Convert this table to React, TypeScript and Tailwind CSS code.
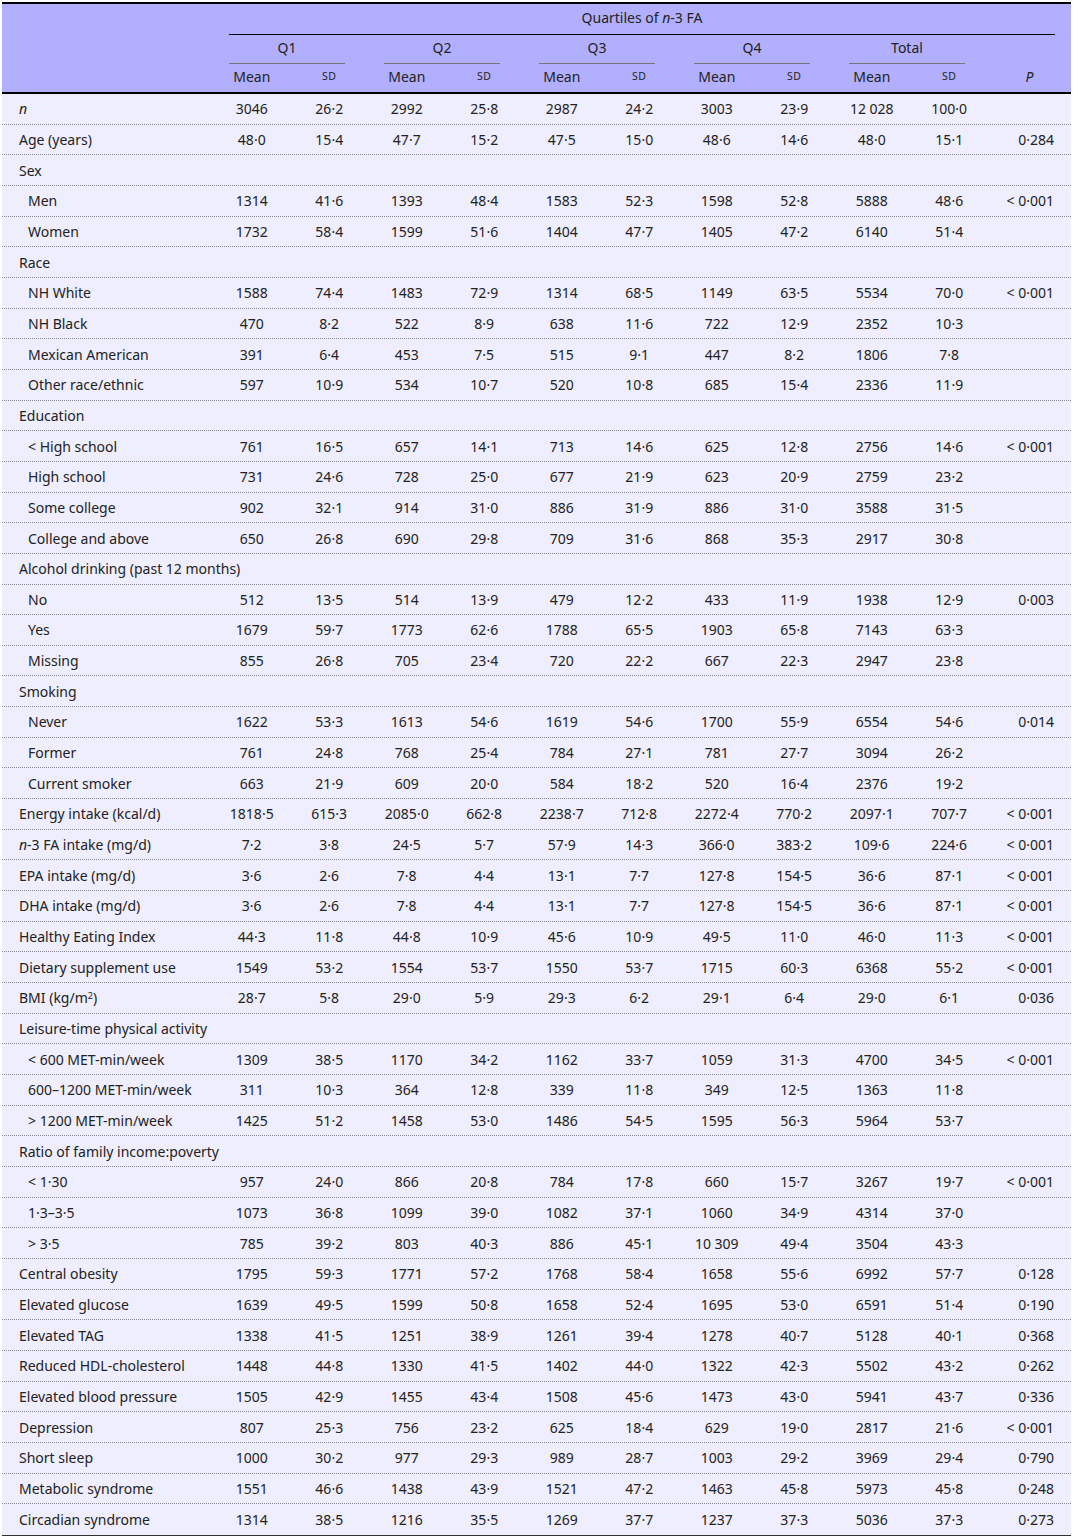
import React from 'react';

type Row = {
  label: React.ReactNode;
  indent?: boolean;
  values?: string[];
  p?: string;
};

const rows: Row[] = [
  { label: <i>n</i>, values: ['3046', '26·2', '2992', '25·8', '2987', '24·2', '3003', '23·9', '12 028', '100·0'] },
  { label: 'Age (years)', values: ['48·0', '15·4', '47·7', '15·2', '47·5', '15·0', '48·6', '14·6', '48·0', '15·1'], p: '0·284' },
  { label: 'Sex' },
  { label: 'Men', indent: true, values: ['1314', '41·6', '1393', '48·4', '1583', '52·3', '1598', '52·8', '5888', '48·6'], p: '< 0·001' },
  { label: 'Women', indent: true, values: ['1732', '58·4', '1599', '51·6', '1404', '47·7', '1405', '47·2', '6140', '51·4'] },
  { label: 'Race' },
  { label: 'NH White', indent: true, values: ['1588', '74·4', '1483', '72·9', '1314', '68·5', '1149', '63·5', '5534', '70·0'], p: '< 0·001' },
  { label: 'NH Black', indent: true, values: ['470', '8·2', '522', '8·9', '638', '11·6', '722', '12·9', '2352', '10·3'] },
  { label: 'Mexican American', indent: true, values: ['391', '6·4', '453', '7·5', '515', '9·1', '447', '8·2', '1806', '7·8'] },
  { label: 'Other race/ethnic', indent: true, values: ['597', '10·9', '534', '10·7', '520', '10·8', '685', '15·4', '2336', '11·9'] },
  { label: 'Education' },
  { label: '< High school', indent: true, values: ['761', '16·5', '657', '14·1', '713', '14·6', '625', '12·8', '2756', '14·6'], p: '< 0·001' },
  { label: 'High school', indent: true, values: ['731', '24·6', '728', '25·0', '677', '21·9', '623', '20·9', '2759', '23·2'] },
  { label: 'Some college', indent: true, values: ['902', '32·1', '914', '31·0', '886', '31·9', '886', '31·0', '3588', '31·5'] },
  { label: 'College and above', indent: true, values: ['650', '26·8', '690', '29·8', '709', '31·6', '868', '35·3', '2917', '30·8'] },
  { label: 'Alcohol drinking (past 12 months)' },
  { label: 'No', indent: true, values: ['512', '13·5', '514', '13·9', '479', '12·2', '433', '11·9', '1938', '12·9'], p: '0·003' },
  { label: 'Yes', indent: true, values: ['1679', '59·7', '1773', '62·6', '1788', '65·5', '1903', '65·8', '7143', '63·3'] },
  { label: 'Missing', indent: true, values: ['855', '26·8', '705', '23·4', '720', '22·2', '667', '22·3', '2947', '23·8'] },
  { label: 'Smoking' },
  { label: 'Never', indent: true, values: ['1622', '53·3', '1613', '54·6', '1619', '54·6', '1700', '55·9', '6554', '54·6'], p: '0·014' },
  { label: 'Former', indent: true, values: ['761', '24·8', '768', '25·4', '784', '27·1', '781', '27·7', '3094', '26·2'] },
  { label: 'Current smoker', indent: true, values: ['663', '21·9', '609', '20·0', '584', '18·2', '520', '16·4', '2376', '19·2'] },
  { label: 'Energy intake (kcal/d)', values: ['1818·5', '615·3', '2085·0', '662·8', '2238·7', '712·8', '2272·4', '770·2', '2097·1', '707·7'], p: '< 0·001' },
  { label: <><i>n</i>-3 FA intake (mg/d)</>, values: ['7·2', '3·8', '24·5', '5·7', '57·9', '14·3', '366·0', '383·2', '109·6', '224·6'], p: '< 0·001' },
  { label: 'EPA intake (mg/d)', values: ['3·6', '2·6', '7·8', '4·4', '13·1', '7·7', '127·8', '154·5', '36·6', '87·1'], p: '< 0·001' },
  { label: 'DHA intake (mg/d)', values: ['3·6', '2·6', '7·8', '4·4', '13·1', '7·7', '127·8', '154·5', '36·6', '87·1'], p: '< 0·001' },
  { label: 'Healthy Eating Index', values: ['44·3', '11·8', '44·8', '10·9', '45·6', '10·9', '49·5', '11·0', '46·0', '11·3'], p: '< 0·001' },
  { label: 'Dietary supplement use', values: ['1549', '53·2', '1554', '53·7', '1550', '53·7', '1715', '60·3', '6368', '55·2'], p: '< 0·001' },
  { label: <>BMI (kg/m<sup className="text-[9px]">2</sup>)</>, values: ['28·7', '5·8', '29·0', '5·9', '29·3', '6·2', '29·1', '6·4', '29·0', '6·1'], p: '0·036' },
  { label: 'Leisure-time physical activity' },
  { label: '< 600 MET-min/week', indent: true, values: ['1309', '38·5', '1170', '34·2', '1162', '33·7', '1059', '31·3', '4700', '34·5'], p: '< 0·001' },
  { label: '600–1200 MET-min/week', indent: true, values: ['311', '10·3', '364', '12·8', '339', '11·8', '349', '12·5', '1363', '11·8'] },
  { label: '> 1200 MET-min/week', indent: true, values: ['1425', '51·2', '1458', '53·0', '1486', '54·5', '1595', '56·3', '5964', '53·7'] },
  { label: 'Ratio of family income:poverty' },
  { label: '< 1·30', indent: true, values: ['957', '24·0', '866', '20·8', '784', '17·8', '660', '15·7', '3267', '19·7'], p: '< 0·001' },
  { label: '1·3–3·5', indent: true, values: ['1073', '36·8', '1099', '39·0', '1082', '37·1', '1060', '34·9', '4314', '37·0'] },
  { label: '> 3·5', indent: true, values: ['785', '39·2', '803', '40·3', '886', '45·1', '10 309', '49·4', '3504', '43·3'] },
  { label: 'Central obesity', values: ['1795', '59·3', '1771', '57·2', '1768', '58·4', '1658', '55·6', '6992', '57·7'], p: '0·128' },
  { label: 'Elevated glucose', values: ['1639', '49·5', '1599', '50·8', '1658', '52·4', '1695', '53·0', '6591', '51·4'], p: '0·190' },
  { label: 'Elevated TAG', values: ['1338', '41·5', '1251', '38·9', '1261', '39·4', '1278', '40·7', '5128', '40·1'], p: '0·368' },
  { label: 'Reduced HDL-cholesterol', values: ['1448', '44·8', '1330', '41·5', '1402', '44·0', '1322', '42·3', '5502', '43·2'], p: '0·262' },
  { label: 'Elevated blood pressure', values: ['1505', '42·9', '1455', '43·4', '1508', '45·6', '1473', '43·0', '5941', '43·7'], p: '0·336' },
  { label: 'Depression', values: ['807', '25·3', '756', '23·2', '625', '18·4', '629', '19·0', '2817', '21·6'], p: '< 0·001' },
  { label: 'Short sleep', values: ['1000', '30·2', '977', '29·3', '989', '28·7', '1003', '29·2', '3969', '29·4'], p: '0·790' },
  { label: 'Metabolic syndrome', values: ['1551', '46·6', '1438', '43·9', '1521', '47·2', '1463', '45·8', '5973', '45·8'], p: '0·248' },
  { label: 'Circadian syndrome', values: ['1314', '38·5', '1216', '35·5', '1269', '37·7', '1237', '37·3', '5036', '37·3'], p: '0·273' },
];

const groups = ['Q1', 'Q2', 'Q3', 'Q4', 'Total'];
const cols = 'grid grid-cols-[211px_repeat(10,77.5px)_83px]';

export default function App() {
  return (
    <div className="p-[2px] pb-0 text-[14px] text-[#222] bg-white" style={{ fontFamily: '"Noto Sans", "Open Sans", sans-serif' }}>
      <div className="w-[1069px] border-t-2 border-b-2 border-t-black border-b-[#333]">
        {/* header */}
        <div className="bg-[#b2b0fe]">
          <div className={`${cols} h-[31px]`}>
            <div />
            <div className="col-span-11 h-full flex items-center justify-center pb-[3px] border-b-[1.5px] border-black ml-4 mr-4">
              <span>Quartiles of <i>n</i>-3 FA</span>
            </div>
          </div>
          <div className={`${cols} h-[29px]`}>
            <div />
            {groups.map((g) => (
              <div key={g} className="col-span-2 flex items-center justify-center pb-[3px] border-b border-[#777] ml-4 mr-[23px]">
                {g}
              </div>
            ))}
            <div />
          </div>
          <div className={`${cols} h-[30px] items-center pb-[3px] border-b-2 border-black`}>
            <div />
            {groups.map((g) => (
              <React.Fragment key={g}>
                <div className="text-center">Mean</div>
                <div className="text-center text-[10.5px] tracking-[0.5px]">SD</div>
              </React.Fragment>
            ))}
            <div className="text-center"><i>P</i></div>
          </div>
        </div>
        {/* body */}
        <div className="bg-[#efeefe]">
          {rows.map((r, i) => (
            <div
              key={i}
              className={`${cols} h-[30.67px] items-center ${i < rows.length - 1 ? 'border-b border-dotted border-[#8a8a96]' : ''}`}
            >
              <div className={`whitespace-nowrap ${r.indent ? 'pl-[26px]' : 'pl-[17px]'}`}>{r.label}</div>
              {Array.from({ length: 10 }).map((_, j) => (
                <div key={j} className="text-center">{r.values ? r.values[j] : ''}</div>
              ))}
              <div className="text-right pr-[17px]">{r.p ?? ''}</div>
            </div>
          ))}
        </div>
      </div>
    </div>
  );
}
